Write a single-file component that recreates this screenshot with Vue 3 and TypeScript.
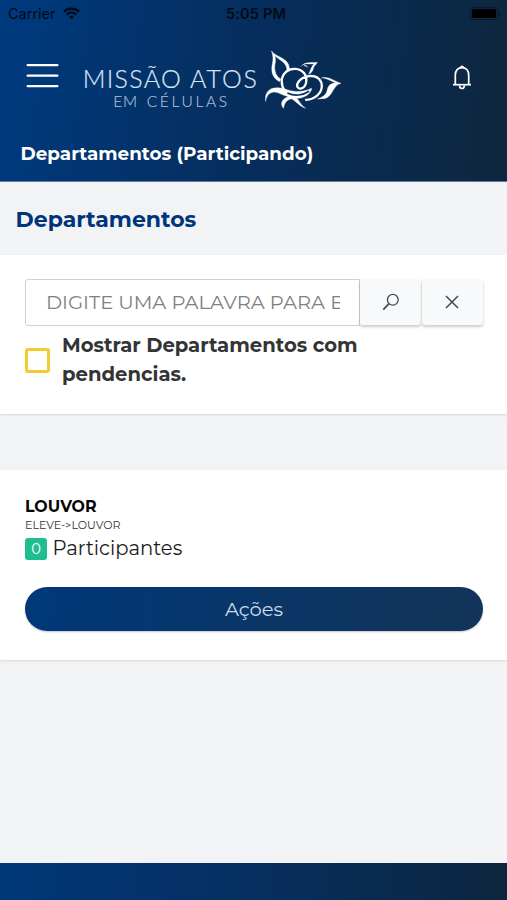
<script setup lang="ts">
import { ref } from 'vue'

interface Department {
  name: string
  path: string
  members: number
}

const query = ref<string>('')
const onlyPending = ref<boolean>(false)
const departments = ref<Department[]>([{ name: 'LOUVOR', path: 'ELEVE->LOUVOR', members: 0 }])
</script>

<template>
  <div class="screen">
    <header class="top">
      <div class="status">
        <div class="carrier">
          <span>Carrier</span>
          <svg width="17" height="13" viewBox="0 0 17 13" fill="none" stroke="#020a16" stroke-width="2.3">
            <path d="M.9 4.8C5.2.6 11.8.6 16.1 4.8" />
            <path d="M3.8 7.6C6.6 5 10.4 5 13.2 7.6" />
            <path d="M5.9 9.7C7.5 8.3 9.5 8.3 11.1 9.7L8.5 12.3z" fill="#020a16" stroke="none" />
          </svg>
        </div>
        <span class="clock">5:05 PM</span>
        <svg class="battery" width="32" height="13" viewBox="0 0 32 13">
          <rect x=".5" y=".5" width="27" height="12" rx="2" fill="none" stroke="#061a36" />
          <rect x="2" y="2" width="24" height="9" rx="1" fill="#000" />
          <path d="M29.4 4.5v4" stroke="#061a36" stroke-width="1.3" />
        </svg>
      </div>
      <div class="brand-row">
        <button class="menu" aria-label="Menu">
          <svg width="33" height="26" viewBox="0 0 33 26" stroke="#fff" stroke-width="2.4" stroke-linecap="round">
            <path d="M1.7 2.1H31.3M1.7 12.6H31.3M1.7 23.1H31.3" />
          </svg>
        </button>
        <svg class="logo" width="262" height="64" viewBox="80 48 262 64">
          <g class="logo-text">
            <text x="82.8" y="87.5" font-size="25" textLength="98" lengthAdjust="spacing">MISSÃO</text>
            <text x="190" y="87.5" font-size="25" textLength="67" lengthAdjust="spacing">ATOS</text>
            <text class="sub" x="113.2" y="106.5" font-size="15.5" textLength="24" lengthAdjust="spacing">EM</text>
            <text class="sub" x="146.7" y="106.5" font-size="15.5" textLength="80.3" lengthAdjust="spacing">CÉLULAS</text>
          </g>
          <g fill="#fff" stroke="#fff" stroke-linecap="round" stroke-linejoin="round">
            <path stroke-width=".5" d="M271.7 51.3C276.5 58 289 57.5 289.5 69L287 70.5C287 62 279 60 274.5 55.5C277 61 273.5 65 275 71C275.8 75 278 77.5 281 79.3L279.5 81.5C273 78.5 270.5 72 272.5 63.5C273.5 59 273 55 271.7 51.3Z" />
            <path fill="none" stroke-width="2.3" d="M285 91.5C280.5 85 280.5 76.5 286 71.8C291 67.5 299.5 67.700 304 73C308 78 306.5 86 302.5 88C299 89.8 296 87 297.5 83.5C299 79.5 304.5 76 310.5 75.800C317.5 75.8 322 80 321.8 86.5C321.5 94 314 99.5 306 99.8" />
            <path stroke-width=".4" d="M265.6 101C264.5 92 270 87.3 278 87.8C285 88 287.5 90.8 294 91.3C301 92 307 90.7 311.8 88.3C310.5 94.5 304 98.5 295.5 98.500C288 98.5 284.5 101.5 283.6 108.3C279.5 104 282 98.5 288.5 96.7C280 94.5 276.5 90.5 271 92.7C267.5 94.2 266.5 97.5 265.6 101Z" />
            <path fill="none" stroke="#09305f" stroke-width="1.7" d="M288 93.2C294 96.3 303 95.500 308.500 91.500" />
            <path stroke-width=".4" d="M291.5 98.5L295.5 97.5C299 99.5 300.5 105 305.5 108.3C300 106.5 296 101.5 291.5 98.5Z" />
            <path stroke-width=".3" d="M301.5 66C305 61 311 63.2 317.5 62.2C316 65 314 65.5 313.5 68C313 71 311.5 73.2 308.5 74.2C310.5 71 311 66.5 314 64C309 64.5 304.5 62.5 301.5 66Z" />
            <path fill="none" stroke-width="1" d="M304.5 65.6Q306.5 65 307.5 67" />
            <path stroke-width=".4" d="M322 77.8C328 76 333 80.5 341 83.3C332.5 85 333.5 96 325 98.5L317.5 99C325.5 96 326.5 93.5 327.5 89C328.5 84.5 332 83 336 83C331 81.5 328 78.5 322 77.8Z" />
          </g>
        </svg>
        <svg class="bell" width="20" height="26" viewBox="0 0 20 26" fill="none" stroke="#fff" stroke-width="1.7">
          <path d="M1 19.7H19" />
          <path d="M3.3 19.5V10C3.3 5.5 6 2.6 10 2.6S16.700 5.5 16.7 10V19.5" />
          <path d="M8.3 2.5a1.7 1.5 0 0 1 3.4 0z" fill="#fff" stroke-width="1" />
          <path d="M7.6 20.5a2.4 3 0 0 0 4.8 0" />
        </svg>
      </div>
      <div class="page-title">Departamentos (Participando)</div>
    </header>

    <main>
      <h1>Departamentos</h1>
      <section class="card filter">
        <div class="search">
          <div class="field"><input v-model="query" placeholder="DIGITE UMA PALAVRA PARA BUSCAR" /></div>
          <button aria-label="Buscar">
            <svg width="18" height="18" viewBox="0 0 18 18" fill="none" stroke="#46484a" stroke-width="1.3">
              <circle cx="10.8" cy="6.8" r="5.4" />
              <path d="M7 10.7L1.3 16.6" stroke-width="1.7" />
            </svg>
          </button>
          <button aria-label="Limpar" @click="query = ''">
            <svg class="clear" width="14" height="14" viewBox="0 0 14 14" fill="none" stroke="#46484a" stroke-width="1.5">
              <path d="M1 1L13 13M13 1L1 13" />
            </svg>
          </button>
        </div>
        <label class="pending">
          <input v-model="onlyPending" type="checkbox" />
          <span>Mostrar Departamentos com<br />pendencias.</span>
        </label>
      </section>

      <section v-for="item in departments" :key="item.name" class="card department">
        <h2>{{ item.name }}</h2>
        <p class="path">{{ item.path }}</p>
        <p class="members"><b>{{ item.members }}</b><span>Participantes</span></p>
        <button class="actions">Ações</button>
      </section>
    </main>
    <footer></footer>
  </div>
</template>

<style>
body {
  margin: 0;
}
</style>

<style scoped>
.screen {
  display: flex;
  flex-direction: column;
  width: 507px;
  height: 900px;
  overflow: hidden;
  background: #f1f3f5;
  font-family: Montserrat, Inter, "Liberation Sans", sans-serif;
}
.screen *,
.screen {
  box-sizing: border-box;
}
button,
input {
  font-family: inherit;
}
h1,
h2,
p {
  margin: 0;
}
.top {
  flex: none;
  height: 182px;
  background: linear-gradient(97deg, #00397c 4%, #062d5b 52%, #0e2740 96%);
  border-bottom: 1px solid #637d9c;
}
.status {
  display: grid;
  grid-template-columns: 1fr auto 1fr;
  align-items: center;
  height: 27px;
  padding: 0 5px 0 8px;
  color: #020a16;
  font-family: Inter, sans-serif;
  font-size: 14.5px;
}
.carrier {
  display: flex;
  align-items: center;
  gap: 7px;
}
.clock {
  font-weight: 600;
  padding-left: 2px;
  letter-spacing: 0.2px;
}
.battery {
  justify-self: end;
}
.brand-row {
  display: flex;
  align-items: flex-start;
  height: 106px;
  padding: 21px 35px 0 26px;
}
.menu {
  display: flex;
  width: 33px;
  margin-top: 15px;
  padding: 0;
  border: 0;
  background: none;
}
.logo {
  margin-left: 21px;
}
.logo-text {
  fill: #d9e4f2;
  stroke: #d9e4f2;
  stroke-width: 0.2px;
  font-family: Lato, sans-serif;
  font-weight: 300;
}
.sub {
  fill: #a9bdd8;
  stroke: #a9bdd8;
}
.bell {
  margin: 17px 0 0 auto;
}
.page-title {
  padding-left: 20.600px;
  color: #fff;
  font-size: 18.35px;
  font-weight: 700;
  line-height: 41px;
}
main {
  flex: 1;
}
h1 {
  height: 73px;
  padding-left: 15.600px;
  color: #00357c;
  font-size: 22px;
  font-weight: 700;
  line-height: 75px;
}
.card {
  background: #fff;
  box-shadow: 0 1px 2px rgba(0, 0, 0, 0.11);
}
.filter {
  height: 159px;
  padding: 24px 24px 0 25px;
}
.search {
  display: flex;
  height: 48px;
}
.field {
  width: 335px;
  height: 47px;
  padding: 0 19px 0 20px;
  border: 1px solid #cfd2d4;
  border-radius: 3px 0 0 3px;
}
.field input {
  width: 100%;
  height: 43px;
  padding: 0;
  border: 0;
  outline: 0;
  background: none;
  font-size: 19.5px;
  font-weight: 400;
}
.field input::placeholder {
  color: #7d8184;
  opacity: 1;
}
.search button {
  display: grid;
  place-items: center;
  width: 61px;
  height: 46px;
  margin-right: 1px;
  padding: 0;
  border: 0;
  border-radius: 3px;
  background: #f8f9fa;
  box-shadow: 0 2px 3px rgba(0, 0, 0, 0.2);
}
.search button + button {
  margin-right: 0;
}
.clear {
  margin-right: 2px;
}
.pending {
  display: flex;
  align-items: center;
  gap: 12px;
  margin-top: 4px;
  color: #323436;
  font-size: 19.6px;
  font-weight: 700;
  line-height: 29px;
}
.pending input {
  appearance: none;
  width: 25px;
  height: 25px;
  margin: 1px 0 0;
  border: 3px solid #f5cc30;
  border-radius: 3px;
}
.department {
  height: 190px;
  margin-top: 56px;
  padding: 26px 24px 0 25px;
}
h2 {
  height: 22px;
  color: #050505;
  font-size: 15.8px;
  font-weight: 700;
  line-height: 22px;
}
.path {
  height: 15px;
  color: #333;
  font-size: 11.05px;
  line-height: 15px;
}
.members {
  display: flex;
  align-items: center;
  gap: 5.4px;
  height: 32px;
  margin-top: -1px;
  color: #1b1b1b;
  font-size: 19.6px;
  line-height: 32px;
}
.members span {
  margin-top: -1px;
}
.members b {
  width: 22px;
  height: 22px;
  margin-top: 2px;
  border-radius: 3px;
  background: #1fbe92;
  color: #fff;
  font-size: 14.6px;
  font-weight: 400;
  line-height: 22px;
  text-align: center;
}
.actions {
  display: block;
  width: 100%;
  height: 44px;
  margin-top: 23px;
  border: 0;
  border-radius: 22px;
  background: linear-gradient(97deg, #00387a, #093668 50%, #13345a 95%);
  box-shadow: 0 1px 2px rgba(0, 0, 0, 0.22);
  color: #cfdbe9;
  font-size: 19.5px;
}
footer {
  flex: none;
  height: 37px;
  background: linear-gradient(92deg, #003878, #062f60 50%, #0d253e);
}
</style>
